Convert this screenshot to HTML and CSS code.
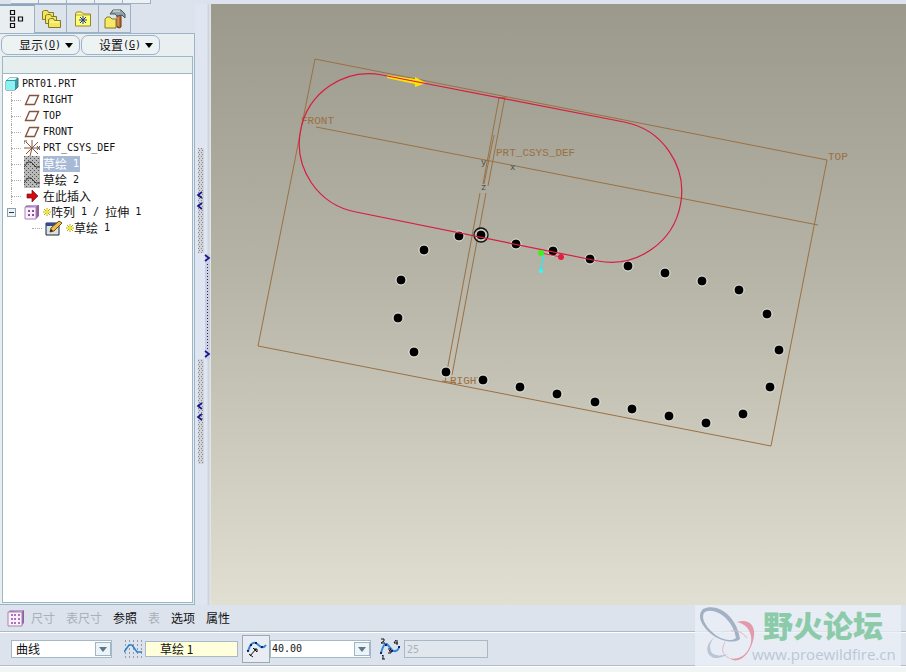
FILE: index.html
```
<!DOCTYPE html>
<html lang="zh-CN">
<head>
<meta charset="utf-8">
<title>PRT01</title>
<link rel="stylesheet" href="styles.css">
</head>
<body>
<svg class="defs" aria-hidden="true">
  <defs>
    <symbol id="plane" viewBox="0 0 16 16"><path d="M5.500 3.500h9l-4 9h-9z" fill="none" stroke="#84543f" stroke-width="1.400"/></symbol>
    <symbol id="sketch" viewBox="0 0 16 16">
      <rect width="16" height="16" fill="url(#dither)"/>
      <path d="M0 11l4-5h3l5 5h4" fill="none" stroke="#333" stroke-width="1"/>
    </symbol>
    <symbol id="pattern" viewBox="0 0 18 18">
      <path d="M1 4l3-3h13v13l-3 3H1z" fill="#8d629d"/><path d="M1 3h14v14H1z" fill="#f9f0fa" stroke="#a983b5"/><path d="M2 2l1-1h14l-2 2z" fill="#bda0ca"/>
      <path d="M4 6h2M7 6h2M11 6h2M4 10h2M7 10h2M11 10h2M4 14h2M7 14h2M11 14h2" stroke="#8c4da5" stroke-width="1.500"/>
    </symbol>
    <symbol id="pattern-small" viewBox="0 0 16 16">
      <path d="M1 3l2-2h12v11l-3 3H1z" fill="#8d629d"/><path d="M1 3h11v12H1z" fill="#faf0fb" stroke="#a983b5"/><path d="M2 2l1-1h11l-2 2z" fill="#bda0ca"/>
      <path d="M4 7h2M8 7h2M4 11h2M8 11h2" stroke="#8c4da5" stroke-width="2"/>
    </symbol>
    <symbol id="star" viewBox="0 0 8 8"><path d="M4 0v8M0 4h8M1 1l6 6M7 1L1 7" stroke="#b5a51b" stroke-width="1"/><path d="M4 1v6M1 4h6" stroke="#ffff28" stroke-width="1"/></symbol>
    <symbol id="chevron" viewBox="0 0 16 14"><rect x=".5" y=".5" width="15" height="13" fill="#eef3f6" stroke="#9eb6c6"/><path d="M4 5h8l-4 5z" fill="#58798f"/></symbol>
    <pattern id="dither" width="4" height="4" patternUnits="userSpaceOnUse"><rect width="4" height="4" fill="#b8b8b8"/><path d="M0 0h1v1H0zM2 2h1v1H2z" fill="#505050"/></pattern>
    <pattern id="grip" width="3" height="4" patternUnits="userSpaceOnUse"><rect width="3" height="4" fill="#d0d3d7"/><path d="M0 0h1v1H0zM1 2h1v1H1z" fill="#85898c"/></pattern>
  </defs>
</svg>
<div class="toolstrip" aria-hidden="true"><i></i><i></i><i></i><i></i><i></i></div>
<main class="workspace">
  <aside class="navigator">
    <div class="tabs">
      <button class="tab active" aria-label="模型树"><svg width="16" height="20" viewBox="0 0 16 20" fill="none" stroke="#111" stroke-width="1.200"><path d="M1.500 1.500h4v4h-4zM1.500 8h4v4h-4zM1.500 14.500h4v4h-4zM9.500 8h4v4h-4z"/></svg></button>
      <button class="tab" aria-label="文件夹"><svg width="20" height="20" viewBox="0 0 20 20" fill="#f2e65e" stroke="#83792a"><path d="M1.500 2.500l2-1h3l1 2h5v7h-11z"/><path d="M4.500 6.500l2-1h3l1 2h5v7h-11z"/><path d="M7.500 10.500l2-1h3l1 2h6v7h-12z"/><path d="M9 13h9" stroke="#ffffb8"/></svg></button>
      <button class="tab" aria-label="收藏夹"><svg width="18" height="18" viewBox="0 0 18 18"><path d="M1.500 4l1-2h5l2 2h7v12h-15z" fill="#ffff72" stroke="#94862c"/><path d="M2 5h14" stroke="#b9a843"/><path d="M9 6v8M5 10h8M6 7l6 6M12 7l-6 6" stroke="#1f35a8"/></svg></button>
      <button class="tab" aria-label="连接"><svg width="22" height="20" viewBox="0 0 22 20"><path d="M1 10l2-2h3l2 2h4v9H1z" fill="#f6e967" stroke="#877923"/><path d="M13 6h4v12l-2 1-2-1z" fill="#b46c33" stroke="#693611"/><path d="M14 8v9" stroke="#f2b66d"/><path d="M6 5l3-4h8l4 4v4l-3-3-5 1-2-2z" fill="#91a2a8" stroke="#46565c"/><path d="M9 2h7" stroke="#edf3f4"/></svg></button>
    </div>
    <div class="panel">
      <div class="menus">
        <button class="pill">显示<span class="latin">(<u>O</u>)</span><svg width="8" height="5" viewBox="0 0 8 5"><path d="M0 0h8L4 5z"/></svg></button>
        <button class="pill">设置<span class="latin">(<u>G</u>)</span><svg width="8" height="5" viewBox="0 0 8 5"><path d="M0 0h8L4 5z"/></svg></button>
      </div>
      <div class="column-head"></div>
      <ul class="tree">
        <li class="row root"><svg width="14" height="14" viewBox="0 0 14 14"><path d="M1 4l3-3h9v9l-3 3H1z" fill="#389a9f" stroke="#477a82"/><path d="M1 4h9v9H1z" fill="#8bf2f4"/><path d="M2 3l2-2h8l-2 2z" fill="#d4ffff"/></svg><span class="latin">PRT01.PRT</span></li>
        <li class="row item"><svg width="16" height="16"><use href="#plane"/></svg><span class="latin">RIGHT</span></li>
        <li class="row item"><svg width="16" height="16"><use href="#plane"/></svg><span class="latin">TOP</span></li>
        <li class="row item"><svg width="16" height="16"><use href="#plane"/></svg><span class="latin">FRONT</span></li>
        <li class="row item"><svg width="16" height="16" viewBox="0 0 16 16" fill="none" stroke="#84543f"><path d="M8 0v8M0 8h16M2 2l12 12M14 2L2 14M8 8L6 16" /><path d="M0 4V1h3M13 6l3 4M16 6l-3 4" stroke="#555"/></svg><span class="latin">PRT_CSYS_DEF</span></li>
        <li class="row item"><svg width="16" height="16"><use href="#sketch"/></svg><span class="name selected">草绘<span class="latin"> 1</span></span></li>
        <li class="row item"><svg width="16" height="16"><use href="#sketch"/></svg><span class="name">草绘<span class="latin"> 2</span></span></li>
        <li class="row item"><svg width="16" height="16" viewBox="0 0 16 16"><path d="M3 6h5V2l6 6-6 6v-4H3z" fill="#d20a12" stroke="#7d1519" stroke-width=".7"/></svg><span class="name">在此插入</span></li>
        <li class="row group"><button class="toggle" aria-label="折叠"></button><svg width="16" height="16"><use href="#pattern-small"/></svg><span class="name"><svg width="8" height="8"><use href="#star"/></svg>阵列<span class="latin"> 1 / </span>拉伸<span class="latin"> 1</span></span></li>
        <li class="row child"><svg width="18" height="16" viewBox="0 0 18 16"><path d="M1 3h13v12H1z" fill="#dce4d8" stroke="#17234f"/><path d="M1 3h13v3H1z" fill="#354b91"/><path d="M5 12l1-4 8-7 3 2-8 8z" fill="#f1ba47" stroke="#684d22"/><path d="M5 12l1-3 2 2z" fill="#222"/></svg><span class="name"><svg width="8" height="8"><use href="#star"/></svg>草绘<span class="latin"> 1</span></span></li>
      </ul>
    </div>
  </aside>
  <div class="splitter" role="separator" aria-orientation="vertical">
    <svg width="16" height="316" viewBox="0 0 16 316">
      <path d="M3 0h6v105H3zM3 211h6v105H3z" fill="url(#grip)"/>
      <path d="M10 106h5v105h-5z" fill="#cbcfe0"/><path d="M12.500 116v86" stroke="#222765" stroke-dasharray="1 2"/>
      <path d="M7 44l-4 3 4 3M7 55l-4 3 4 3M7 255l-4 3 4 3M7 266l-4 3 4 3M10 107l4 3-4 3M10 203l4 3-4 3" fill="none" stroke="#17168f" stroke-width="1.700"/>
    </svg>
  </div>
  <section class="viewport" aria-label="模型视图">
    <svg class="scene" viewBox="211 4 695 601" preserveAspectRatio="xMidYMid meet">
      <g class="datum">
        <path d="M315 59L827 160L771 446L258 346ZM316 127L818 225"/>
        <path d="M499 98L483 184M505 97L488 186M498 98l8-1M480 193L445 382M486 193L452 375M494 135L484 184M442 381l14 2"/>
      </g>
      <g class="model-label"><text x="301" y="124">FRONT</text><text x="496" y="156">PRT_CSYS_DEF</text><text x="828" y="160">TOP</text><text x="450" y="384">RIGHT</text></g>
      <g class="axis-label"><text x="481" y="165">y</text><text x="510" y="170">x</text><text x="481" y="190">z</text></g>
      <g class="points">
        <circle cx="424" cy="250" r="5"/><circle cx="459" cy="236" r="5"/><circle cx="481" cy="235" r="5"/><circle cx="516" cy="244" r="5"/><circle cx="553" cy="251" r="5"/><circle cx="590" cy="259" r="5"/><circle cx="628" cy="266" r="5"/><circle cx="665" cy="273" r="5"/><circle cx="702" cy="281" r="5"/><circle cx="739" cy="290" r="5"/><circle cx="767" cy="314" r="5"/><circle cx="779" cy="350" r="5"/><circle cx="770" cy="387" r="5"/><circle cx="743" cy="414" r="5"/><circle cx="706" cy="423" r="5"/><circle cx="669" cy="416" r="5"/><circle cx="632" cy="409" r="5"/><circle cx="595" cy="402" r="5"/><circle cx="557" cy="394" r="5"/><circle cx="520" cy="387" r="5"/><circle cx="483" cy="380" r="5"/><circle cx="446" cy="372" r="5"/><circle cx="414" cy="352" r="5"/><circle cx="398" cy="318" r="5"/><circle cx="401" cy="280" r="5"/>
      </g>
      <circle cx="481" cy="235" r="7" fill="none" stroke="#111" stroke-width="1.300"/>
      <path d="M387 75l28 4 0-2 11 6-11 4 0-3-28-6z" fill="#ffe600"/>
      <path class="curve" d="M382 75L624 122A70 70 0 0 1 598 261L356 212A69 69 0 0 1 382 75Z"/>
      <path d="M541 253l20 4" stroke="#e22949"/><path d="M543 255l-2 16" stroke="#38e5e5" stroke-width="1.500"/><circle cx="561" cy="257" r="3" fill="#e21d42"/><circle cx="541" cy="253" r="3" fill="#42ed20"/><circle cx="541" cy="271" r="2" fill="#2ff"/>
    </svg>
  </section>
</main>
<footer class="dashboard">
  <nav class="options">
    <svg width="18" height="18"><use href="#pattern"/></svg>
    <button disabled>尺寸</button><button disabled>表尺寸</button><button>参照</button><button disabled>表</button><button>选项</button><button>属性</button>
  </nav>
  <div class="controls">
    <span class="combo"><select aria-label="参照类型"><option>曲线</option></select><svg width="16" height="14"><use href="#chevron"/></svg></span>
    <label class="sketch-field"><svg width="18" height="18" viewBox="0 0 18 18"><path d="M1 1h17M1 5h17M1 9h17M1 13h17M1 17h17" stroke="#555" stroke-dasharray="1 3"/><path d="M0 12l5-7h3l5 7h5" fill="none" stroke="#287fd0" stroke-width="1.500"/></svg><input class="collector" aria-label="草绘" value="草绘 1" readonly></label>
    <div class="spacing">
      <button class="mode" aria-label="间距"><svg width="22" height="20" viewBox="0 0 22 20"><path d="M3 12Q6 2 11 4l5 4q3 1 5-2" fill="none" stroke="#3288d7" stroke-width="2"/><path d="M2 11h2v2H2zM5 5h2v2H5zM10 3h2v2h-2zM16 7h2v2h-2z" fill="#172169"/><path d="M4 15l4 3M5 17l6-7M8 9l4 4M9 10h3v3" fill="none" stroke="#111"/></svg></button>
      <span class="combo"><select class="latin" aria-label="间距值"><option>40.00</option></select><svg width="16" height="14"><use href="#chevron"/></svg></span>
    </div>
    <label class="count"><svg width="22" height="22" viewBox="0 0 22 22"><path d="M2 15Q5 4 8 6l5 6q4 3 7-2" fill="none" stroke="#3288d7" stroke-width="2"/><path d="M1 14h2v2H1zM6 6h2v2H6zM12 12h2v2h-2zM19 8h2v2h-2z" fill="#172169"/><path d="M2 1h3v2L2 5h4M3 18l1-1v4M3 21h3M9 11h3l-2 2h2v2H9M17 2l-2 3h4M18 2v5" fill="none" stroke="#111"/></svg><input class="latin" aria-label="成员数" value="25" disabled></label>
  </div>
  <div class="status"></div>
  <div class="watermark">
    <svg width="58" height="58" viewBox="0 0 58 58"><path fill-rule="evenodd" fill="#a3b1c5" d="M6 4C20-3 40 11 43 34C37 39 25 36 17 31C7 24-2 12 6 4ZM8 7C2 13 11 25 20 31C28 36 36 36 39 33C36 14 18 2 8 7Z"/><path fill="#bac5d6" d="M35 25C22 26 8 37 15 48c5 4 11 2 16 1C13 61 2 43 18 32q8-6 17-7z"/><path fill="#e49aaa" d="M40 17c14-4 20 6 16 19C52 51 41 60 32 53c13 4 24-9 22-22-2-9-7-12-14-14z"/><path d="M28 37c-4 7-3 13 4 16M34 26q9-2 16 7" fill="none" stroke="#dfb8c9"/></svg>
    <div class="brand"><strong>野火论坛</strong><span>www.proewildfire.cn</span></div>
  </div>
</footer>
</body>
</html>
```
FILE: styles.css
```
* { box-sizing: border-box; }
body {
  margin: 0; min-height: 100vh; display: flex; flex-direction: column;
  background: #dce3ed; color: #111;
  font: 12px/16px "Noto Sans CJK SC", sans-serif;
}
button, input, select { font: inherit; color: inherit; margin: 0; padding: 0; border: 0; border-radius: 0; }
button { background: none; }
svg { display: block; flex: none; }
.defs { position: absolute; width: 0; height: 0; }
.latin { font-family: "DejaVu Sans Mono", monospace; font-size: 10px; white-space: pre; }

.toolstrip { display: flex; height: 4px; padding-left: 11px; flex: none; }
.toolstrip i { width: 28px; border: 1px solid #9fb2c5; border-top: 0; border-left-width: 0; background: #edf1f4; }
.workspace { flex: 1; display: grid; grid-template-columns: 195px 16px minmax(0, 1fr); min-height: 0; }

.navigator { display: flex; flex-direction: column; }
.tabs { display: flex; height: 29px; }
.tab { width: 32px; display: grid; place-items: center; border: 1px solid #9db1c5; border-left: 0; background: #dce3eb; }
.tab.active { width: 35px; padding-bottom: 2px; border-bottom: 0; border-top: 2px solid #8fa8bd; background: #e9eef0; }
.panel { flex: 1; display: flex; flex-direction: column; padding: 1px; border: 1px solid #9db4c6; border-left: 0; background: #e9eef0; }
.menus { display: flex; gap: 1px; height: 21px; }
.pill { width: 79px; height: 20px; display: flex; align-items: center; justify-content: flex-end; padding-right: 6px; border: 1px solid #9db1c9; border-radius: 7px; background: #edf2f3; }
.pill svg { margin-left: 4px; }
.column-head { height: 18px; border: 1px solid #9cb7c6; background: #e7eeee; margin-left: 1px; }
.tree { flex: 1; margin: 0 0 0 1px; padding: 2px 0 0 2px; list-style: none; background: #fff; border: 1px solid #9cb7c6; border-top: 0; }
.row { height: 16px; display: flex; align-items: center; gap: 3px; white-space: nowrap; }
.name { display: flex; align-items: center; height: 16px; line-height: 16px; }
.item { margin-left: 6px; padding-left: 12px; border-left: 1px dotted #aaa; }
.item::before, .child::before { content: ""; width: 10px; border-top: 1px dotted #aaa; margin-left: -13px; }
.selected { background: #a7bad5; color: #fff; padding-right: 1px; }
.toggle { width: 9px; height: 9px; border: 1px solid #8aa0ad; background: linear-gradient(#263744, #263744) center / 5px 1px no-repeat, #edf2f3; }
.group { padding-left: 2px; }
.group > svg { margin-left: 5px; }
.child { padding-left: 40px; }
.splitter { display: flex; flex-direction: column; padding-top: 144px; background: linear-gradient(90deg, #dfe6f1 75%, #cbd1da 82%, #e5e7eb); }
.viewport { background: linear-gradient(#9b998b, #b5b4a7 45%, #e1dfd1); overflow: hidden; }
.scene { width: 100%; height: 100%; }
.datum { fill: none; stroke: #9b7042; stroke-width: 1; }
.curve { fill: none; stroke: #d91b40; stroke-width: 1.2; }
.points { stroke: #f0f0e8; stroke-width: 1; }
.model-label { fill: #9b7042; font: 11px "Liberation Mono", monospace; }
.axis-label { fill: #4b4e4a; font: 9px "Liberation Mono", monospace; }

.dashboard { position: relative; flex: none; }
.options { height: 27px; padding-left: 7px; display: flex; align-items: center; gap: 11px; border-bottom: 1px solid #acbac4; }
.options svg { margin-right: -5px; }
.options button:disabled { color: #a9b0b8; }
.controls { height: 34px; padding-left: 11px; display: flex; align-items: center; gap: 8px; border-top: 1px solid #fff; border-bottom: 1px solid #b1bcc4; }
.combo { position: relative; width: 101px; }
.combo select { display: block; width: 100%; height: 18px; padding-left: 4px; appearance: none; border: 1px solid #a4b8c6; background: #fff; }
.spacing .combo select { padding-left: 1px; }
.combo svg { position: absolute; right: 1px; top: 2px; pointer-events: none; }
.sketch-field, .spacing, .count { display: flex; align-items: center; }
.sketch-field { gap: 3px; padding-left: 4px; margin-right: -4px; }
.collector { width: 93px; height: 16px; padding-left: 14px; border: 1px solid #a9bac6; background: #ffffdc; }
.mode { width: 28px; height: 28px; display: grid; place-items: center; border: 1px solid #9aa9b9; background: #e9edf3; }
.count { gap: 3px; }
.count input { width: 84px; height: 18px; padding-left: 2px; border: 1px solid #a9b8c6; background: #e1e7ec; color: #aab3bc; }
.status { height: 6px; background: #f2f5f6; border-top: 1px solid #fff; }
.watermark { position: absolute; top: 0; right: 5px; width: 206px; height: 61px; padding-left: 2px; display: flex; background: rgba(235, 239, 246, .8); }
.brand { display: flex; flex-direction: column; gap: 2px; }
.brand strong { padding-left: 8px; font-size: 30px; line-height: 38px; font-weight: 900; color: #8bcbaa; }
.brand span { margin-left: -3px; font: 15px/18px "Open Sans", sans-serif; color: #b9c7d8; }
```
